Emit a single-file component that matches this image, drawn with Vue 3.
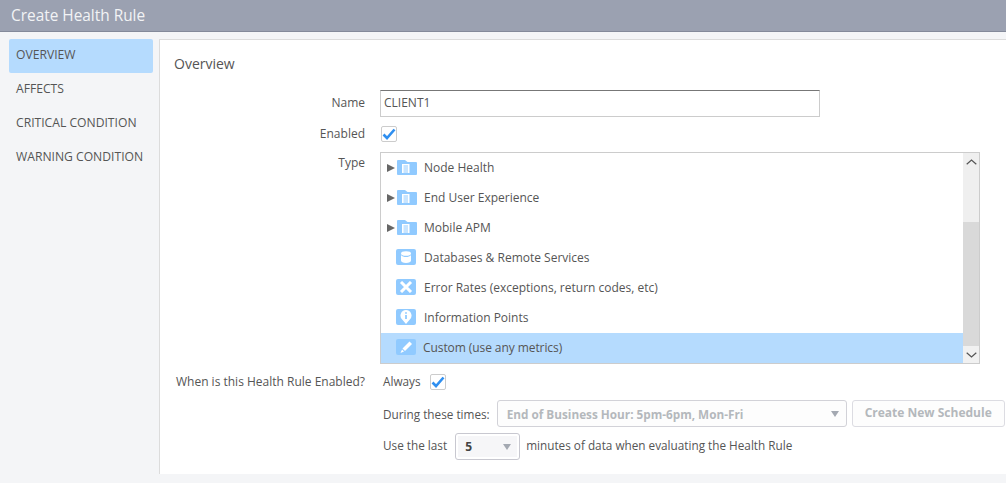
<script setup>
const nav = ['OVERVIEW', 'AFFECTS', 'CRITICAL CONDITION', 'WARNING CONDITION']
const folders = ['Node Health', 'End User Experience', 'Mobile APM']
</script>

<template>
  <div class="page">
    <header class="title">Create Health Rule</header>
    <div class="body">
      <nav class="side">
        <div v-for="(n, i) in nav" :key="n" class="nav" :class="{ on: i === 0 }">{{ n }}</div>
      </nav>
      <main class="panel">
        <h2 class="heading">Overview</h2>
        <div class="row name-row">
          <label class="lab">Name</label>
          <div class="input">CLIENT1</div>
        </div>
        <div class="row en-row">
          <label class="lab">Enabled</label>
          <span class="check"><svg width="14" height="12" viewBox="0 0 14 12"><path d="M1.5 6.5 5 10 12.5 1.5" fill="none" stroke="#2f8ff0" stroke-width="2.6"/></svg></span>
        </div>
        <div class="row type-row">
          <label class="lab type-lab">Type</label>
          <div class="list">
            <div class="items">
              <div v-for="f in folders" :key="f" class="item">
                <span class="arrow"></span>
                <svg class="ic folder" width="20" height="15" viewBox="0 0 20 15">
                  <path d="M0 1Q0 0 1 0H8L10.5 2H19Q20 2 20 3V14Q20 15 19 15H1Q0 15 0 14Z" fill="#90caff"/>
                  <path d="M5 4H12.5V13H5Z" fill="#fff"/>
                  <path d="M6.5 6H11M6.5 8H11M6.5 10H11M6.5 12H11" stroke="#90caff" stroke-width="1"/>
                </svg>
                <span class="txt">{{ f }}</span>
              </div>
              <div class="item leaf">
                <span class="tile">
                  <svg width="12" height="12" viewBox="0 0 12 12"><ellipse cx="6" cy="2.5" rx="5" ry="2.3" fill="#fff"/><path d="M1 4V9.5C1 11 3 12 6 12S11 11 11 9.5V4C10 5.6 8 6 6 6S2 5.6 1 4Z" fill="#fff"/></svg>
                </span>
                <span class="txt">Databases &amp; Remote Services</span>
              </div>
              <div class="item leaf">
                <span class="tile">
                  <svg width="14" height="12" viewBox="0 0 14 12"><path d="M2 1 12 11M12 1 2 11" stroke="#fff" stroke-width="3"/></svg>
                </span>
                <span class="txt">Error Rates (exceptions, return codes, etc)</span>
              </div>
              <div class="item leaf">
                <span class="tile">
                  <svg width="12" height="14" viewBox="0 0 12 14"><path d="M6 0A5.6 5.6 0 0 1 9.6 9.8L6 14 2.4 9.8A5.6 5.6 0 0 1 6 0Z" fill="#fff"/><path d="M6 2.3V3.8M6 5V9" stroke="#90caff" stroke-width="1.8"/></svg>
                </span>
                <span class="txt">Information Points</span>
              </div>
              <div class="item leaf sel">
                <span class="tile">
                  <svg width="14" height="14" viewBox="0 0 14 14"><path d="M10.5 1.5 13 4 6 11 3.5 8.5Z" fill="#fff"/><path d="M3 9.5 5 11.5 1.5 13Z" fill="#fff"/></svg>
                </span>
                <span class="txt">Custom (use any metrics)</span>
              </div>
            </div>
            <div class="scroll">
              <div class="sb-top">
                <svg width="11" height="6" viewBox="0 0 11 6"><path d="M.7 5.3 5.5 1l4.8 4.3" fill="none" stroke="#555" stroke-width="1.2"/></svg>
              </div>
              <div class="sb-thumb"></div>
              <div class="sb-btn">
                <svg width="11" height="6" viewBox="0 0 11 6"><path d="M.7.7 5.5 5l4.8-4.3" fill="none" stroke="#555" stroke-width="1.2"/></svg>
              </div>
            </div>
          </div>
        </div>
        <div class="row when-row">
          <label class="lab">When is this Health Rule Enabled?</label>
          <div class="opts">
            <div class="always">
              <span>Always</span>
              <span class="check"><svg width="14" height="12" viewBox="0 0 14 12"><path d="M1.5 6.5 5 10 12.5 1.5" fill="none" stroke="#2f8ff0" stroke-width="2.6"/></svg></span>
            </div>
            <div class="during">
              <span>During these times:</span>
              <div class="select dis wide">
                <b>End of Business Hour: 5pm-6pm, Mon-Fri</b>
                <i class="caret"></i>
              </div>
              <div class="btn">Create New Schedule</div>
            </div>
            <div class="last">
              <span class="up">Use the last</span>
              <div class="select small">
                <div class="inner"><b>5</b><i class="caret"></i></div>
              </div>
              <span class="up">minutes of data when evaluating the Health Rule</span>
            </div>
          </div>
        </div>
      </main>
    </div>
    <div class="foot"></div>
  </div>
</template>

<style>
html, body { margin: 0; background: #f4f5f7; }
</style>

<style scoped>
.page { width: 1006px; height: 483px; overflow: hidden; background: #f4f5f7; font-family: "Open Sans", sans-serif; font-size: 12px; color: #555; }
.title { height: 31px; line-height: 31px; background: #9ba1b1; border-bottom: 1px solid #848a9a; padding-left: 11px; color: #f2f3f5; font-size: 15.4px; }
.body { display: flex; padding-top: 7px; }
.side { width: 159px; padding-left: 9px; box-sizing: border-box; flex: none; }
.nav { width: 144px; height: 34px; line-height: 32px; padding-left: 7px; box-sizing: border-box; border-radius: 2px; font-size: 12.15px; }
.nav.on { background: #b5dbfe; }
.panel { flex: 1; height: 435px; box-sizing: border-box; background: #fff; border-left: 1px solid #dcdcdc; border-top: 1px solid #dcdcdc; position: relative; }
.heading { margin: 0; padding: 14px 0 0 14px; font-size: 14px; line-height: 19px; font-weight: 400; color: #555; height: 21px; }
.row { display: flex; }
.lab { width: 205px; text-align: right; flex: none; margin-right: 15px; }
.name-row { margin-top: 15px; height: 27px; align-items: center; }
.name-row .lab, .en-row .lab { margin-bottom: 2px; }
.input { width: 440px; height: 27px; box-sizing: border-box; border: 1px solid #ccc; border-top-color: #777; padding-left: 3px; line-height: 23px; }
.en-row { margin-top: 9px; height: 16px; align-items: center; }
.check { width: 16px; height: 16px; box-sizing: border-box; border: 1px solid #ccc; border-radius: 2px; display: inline-flex; align-items: center; justify-content: center; background: #fff; flex: none; }
.en-row .check { margin-left: 1px; }
.type-row { margin-top: 10px; }
.type-lab { line-height: 22px; }
.list { width: 600px; height: 212px; box-sizing: border-box; border: 1px solid #ccc; display: flex; }
.items { flex: 1; }
.item { height: 30px; display: flex; align-items: center; padding-left: 6px; }
.item.leaf { padding-left: 15px; }
.txt { margin-bottom: 2px; }
.arrow { width: 0; height: 0; border-left: 8px solid #666; border-top: 4px solid transparent; border-bottom: 4px solid transparent; margin-right: 2px; margin-bottom: 1px; }
.ic { margin-right: 7px; flex: none; margin-bottom: 1px; }
.tile { width: 20px; height: 16px; border-radius: 2px; background: #90caff; display: inline-flex; align-items: center; justify-content: center; margin-right: 8px; margin-bottom: 2px; flex: none; }
.item.sel { background: #b5dbfe; }
.sel .txt { margin-left: -1px; letter-spacing: -0.08px; }
.scroll { width: 16px; flex: none; display: flex; flex-direction: column; background: #d9d9d9; }
.sb-top { height: 69px; background: #efefef; display: flex; justify-content: center; padding-top: 6px; box-sizing: border-box; }
.sb-top svg, .sb-btn svg { display: block; }
.sb-thumb { flex: 1; }
.sb-btn { height: 17px; background: #f1f1f1; display: flex; justify-content: center; align-items: center; }
.when-row { margin-top: 10px; }
.when-row > .lab { line-height: 16px; }
.opts { margin-left: 3px; flex: none; font-size: 11.75px; }
.always { height: 16px; line-height: 14px; display: flex; gap: 8px; }
.always .check { margin-left: 1px; }
.during { display: flex; align-items: center; margin-top: 10px; height: 27px; }
.select { height: 27px; box-sizing: border-box; border: 1px solid #d2d2d8; border-radius: 3px; display: flex; align-items: center; position: relative; }
.select b { font-weight: 700; }
.select.dis { color: #b4b8bc; background: #fdfdfd; }
.wide { width: 350px; margin-left: 7px; padding-left: 9px; }
.caret { position: absolute; width: 0; height: 0; border-top: 6px solid #a4a9b2; border-left: 4.5px solid transparent; border-right: 4.5px solid transparent; }
.wide .caret { right: 7px; top: 10px; }
.btn { width: 153px; height: 27px; box-sizing: border-box; margin-left: 5px; border: 1px solid #dcdce2; border-radius: 3px; text-align: center; line-height: 24px; color: #b4b8bc; font-weight: 700; font-size: 12px; background: #fdfdfd; }
.last { display: flex; align-items: center; margin-top: 6px; height: 27px; }
.up { margin-bottom: 4px; }
.small { width: 65px; margin-left: 8px; margin-right: 6px; padding: 2px; border-color: #c8c8d0; font-size: 12px; }
.inner { flex: 1; height: 21px; background: #f6f6f8; display: flex; align-items: center; padding-left: 7px; color: #444; position: relative; }
.small .caret { right: 6px; top: 8px; }
.foot { height: 9px; }
</style>
